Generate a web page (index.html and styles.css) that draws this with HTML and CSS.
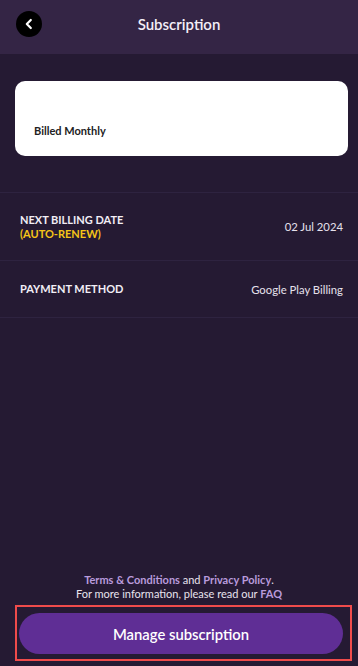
FILE: index.html
```html
<!DOCTYPE html>
<html lang="en">
<head>
    <meta charset="UTF-8">
    <meta name="viewport" content="width=device-width, initial-scale=1.0">
    <title>Subscription</title>
    <link rel="stylesheet" href="styles.css">
</head>
<body>
    <div class="screen">
        <header class="topbar">
            <button class="back" aria-label="Back">
                <svg width="12" height="12" viewBox="0 0 12 12">
                    <path d="M7.8 2 L3.8 6 L7.8 10" fill="none" stroke="#fff" stroke-width="2.2" stroke-linecap="round" stroke-linejoin="round"/>
                </svg>
            </button>
            <h1 class="title">Subscription</h1>
            <span></span>
        </header>

        <div class="plan-card">
            <span class="plan-name">Billed Monthly</span>
        </div>

        <div class="details">
            <div class="row row-tall">
                <div class="label">
                    NEXT BILLING DATE
                    <span class="renew">(AUTO-RENEW)</span>
                </div>
                <div class="value">02 Jul 2024</div>
            </div>
            <div class="row">
                <div class="label">PAYMENT METHOD</div>
                <div class="value">Google Play Billing</div>
            </div>
        </div>

        <div class="spacer"></div>

        <footer class="footer">
            <p class="legal">
                <a href="#">Terms &amp; Conditions</a> and <a href="#">Privacy Policy</a>.<br>
                For more information, please read our <a href="#">FAQ</a>
            </p>
            <div class="highlight">
                <button class="manage">Manage subscription</button>
            </div>
        </footer>
    </div>
</body>
</html>
```

FILE: styles.css
```css
body {
    margin: 0;
    background: #251a33;
    font-family: Lato, "Noto Sans", sans-serif;
    color: #fff;
}

.screen {
    display: flex;
    flex-direction: column;
    height: 100vh;
}

.topbar {
    display: grid;
    grid-template-columns: 1fr auto 1fr;
    align-items: center;
    height: 54px;
    padding: 0 16px;
    box-sizing: border-box;
    background: #342545;
}

.back {
    width: 26px;
    height: 26px;
    border: none;
    border-radius: 50%;
    background: #000;
    padding: 0;
    display: flex;
    align-items: center;
    justify-content: center;
    margin-top: -6px;
}

.title {
    margin: -6px 0 0;
    font-size: 15px;
    font-weight: 600;
    color: #f4eff8;
}

.plan-card {
    display: flex;
    align-items: flex-end;
    height: 75px;
    box-sizing: border-box;
    margin: 27px 10px 0 15px;
    padding: 0 19px 19px;
    background: #fff;
    border-radius: 10px;
}

.plan-name {
    font-size: 11px;
    font-weight: 700;
    color: #222;
}

.details {
    margin-top: 36px;
    border-top: 1px solid #2e2340;
}

.row {
    display: flex;
    justify-content: space-between;
    align-items: center;
    height: 56px;
    padding: 0 15px 0 20px;
    border-bottom: 1px solid #2e2340;
}

.row-tall {
    height: 67px;
}

.label {
    font-size: 11px;
    font-weight: 700;
    line-height: 14px;
    color: #f2eef6;
}

.renew {
    display: block;
    color: #f5c518;
}

.value {
    font-size: 11.3px;
    color: #e6e1ec;
}

.spacer {
    flex: 1;
}

.legal {
    margin: 0 0 4px;
    text-align: center;
    font-size: 11px;
    line-height: 14px;
    color: #e8e3ee;
}

.legal a {
    color: #b99bdc;
    font-weight: 700;
    text-decoration: none;
}

.highlight {
    margin: 0 6px 5px 15px;
    padding: 6px 7px 5px 2px;
    border: 2px solid #f04b4b;
}

.manage {
    display: block;
    width: 100%;
    height: 41px;
    border: none;
    border-radius: 21px;
    background: #5f2e95;
    color: #fff;
    font-family: Lato, "Noto Sans", sans-serif;
    font-size: 14.8px;
    font-weight: 600;
}
```
